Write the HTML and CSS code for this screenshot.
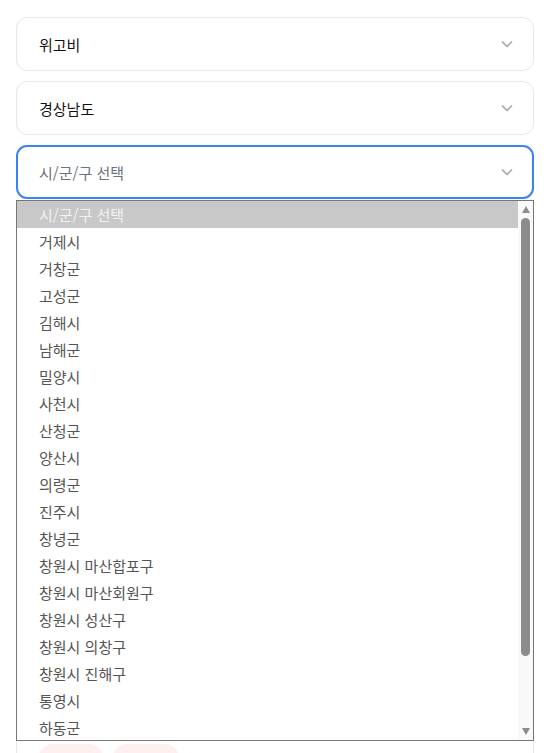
FILE: index.html
```html
<!DOCTYPE html>
<html lang="ko">
<head>
    <meta charset="UTF-8">
    <meta name="viewport" content="width=device-width, initial-scale=1.0">
    <title>지역 선택</title>
    <link rel="stylesheet" href="styles.css">
</head>
<body>

<div class="page">
    <div class="field">
        <span class="field-text">위고비</span>
        <svg class="chevron" width="12" height="8" viewBox="0 0 12 8"><path d="M1 1.5 L6 6.5 L11 1.5" fill="none" stroke="#9ca3af" stroke-width="1.5"/></svg>
    </div>

    <div class="field">
        <span class="field-text">경상남도</span>
        <svg class="chevron" width="12" height="8" viewBox="0 0 12 8"><path d="M1 1.5 L6 6.5 L11 1.5" fill="none" stroke="#9ca3af" stroke-width="1.5"/></svg>
    </div>

    <div class="select-wrap">
        <div class="field field-focus">
            <span class="field-text placeholder">시/군/구 선택</span>
            <svg class="chevron" width="12" height="8" viewBox="0 0 12 8"><path d="M1 1.5 L6 6.5 L11 1.5" fill="none" stroke="#9ca3af" stroke-width="1.5"/></svg>
        </div>

        <!-- open option list -->
        <div class="option-list">
            <div class="options">
                <div class="option selected">시/군/구 선택</div>
                <div class="option">거제시</div>
                <div class="option">거창군</div>
                <div class="option">고성군</div>
                <div class="option">김해시</div>
                <div class="option">남해군</div>
                <div class="option">밀양시</div>
                <div class="option">사천시</div>
                <div class="option">산청군</div>
                <div class="option">양산시</div>
                <div class="option">의령군</div>
                <div class="option">진주시</div>
                <div class="option">창녕군</div>
                <div class="option">창원시 마산합포구</div>
                <div class="option">창원시 마산회원구</div>
                <div class="option">창원시 성산구</div>
                <div class="option">창원시 의창구</div>
                <div class="option">창원시 진해구</div>
                <div class="option">통영시</div>
                <div class="option">하동군</div>
            </div>
            <div class="scrollbar">
                <span class="arrow arrow-up"></span>
                <span class="thumb"></span>
                <span class="arrow arrow-down"></span>
            </div>
        </div>
    </div>

    <div class="card">
        <div class="card-body"></div>
        <div class="tags">
            <span class="tag"></span>
            <span class="tag tag-wide"></span>
        </div>
    </div>
</div>

</body>
</html>
```

FILE: styles.css
```css
body {
    margin: 0;
    padding: 0;
    background-color: #fff;
    font-family: "Noto Sans CJK KR", "Noto Sans", sans-serif;
}

.page {
    width: 518px;
    padding: 17px 0 40px 16px;
    display: flex;
    flex-direction: column;
    gap: 10px;
}

.field {
    height: 54px;
    box-sizing: border-box;
    border: 1px solid #e5e7eb;
    border-radius: 11px;
    padding: 0 20px 0 22px;
    display: flex;
    align-items: center;
    justify-content: space-between;
}

.field-text {
    font-size: 15px;
    color: #111;
}

.placeholder {
    color: #6b7280;
}

.chevron {
    display: block;
}

.field-focus {
    border: 2px solid #3b82f6;
    padding-left: 21px;
    padding-right: 19px;
}

.select-wrap {
    position: relative;
}

.option-list {
    position: absolute;
    top: 55px;
    left: 0;
    width: 518px;
    height: 541px;
    box-sizing: border-box;
    border: 1px solid #767676;
    background-color: #fff;
    display: flex;
    z-index: 2;
}

.options {
    flex: 1;
}

.option {
    height: 27px;
    line-height: 27px;
    padding-left: 22px;
    font-size: 15px;
    color: #555;
}

.option.selected {
    background-color: #c8c8c8;
    color: #f2f2f2;
}

.scrollbar {
    width: 15px;
    background-color: #f9f9f9;
    display: flex;
    flex-direction: column;
    align-items: center;
}

.arrow {
    width: 0;
    height: 0;
    border-left: 4px solid transparent;
    border-right: 4px solid transparent;
}

.arrow-up {
    margin-top: 5px;
    border-bottom: 7px solid #8c8c8c;
}

.arrow-down {
    margin-top: auto;
    margin-bottom: 5px;
    border-top: 7px solid #8c8c8c;
}

.thumb {
    margin-top: 5px;
    width: 9px;
    height: 438px;
    border-radius: 5px;
    background-color: #8c8c8c;
}

.card {
    border: 1px solid #e5e7eb;
    border-radius: 11px;
    padding: 0 22px 20px;
}

.card-body {
    height: 534px;
}

.tags {
    display: flex;
    gap: 10px;
}

.tag {
    width: 64px;
    height: 28px;
    border-radius: 14px;
    background-color: #fef0f0;
}

.tag-wide {
    width: 66px;
}
```
